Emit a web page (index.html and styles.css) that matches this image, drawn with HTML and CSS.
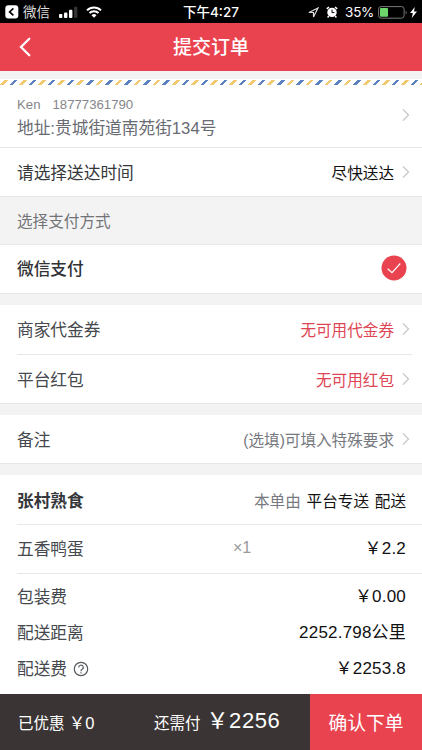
FILE: index.html
```html
<!DOCTYPE html>
<html lang="zh-CN">
<head>
    <meta charset="UTF-8">
    <meta name="viewport" content="width=device-width, initial-scale=1.0">
    <title>提交订单</title>
    <link rel="stylesheet" href="styles.css">
</head>
<body>
    <div class="status-bar">
        <div class="status-left">
            <svg class="back-app" width="14" height="14" viewBox="0 0 14 14">
                <rect x="0.3" y="0.3" width="13" height="13.2" rx="3" fill="#fff"/>
                <path d="M8.4 3.4 4.6 6.9l3.8 3.5" fill="none" stroke="#000" stroke-width="1.6"/>
            </svg>
            <span class="app-name">微信</span>
            <svg class="signal" width="19" height="12" viewBox="0 0 19 12">
                <rect x="0" y="8" width="3.4" height="4" rx="1" fill="#fff"/>
                <rect x="5" y="6.4" width="3.4" height="5.6" rx="1" fill="#fff"/>
                <rect x="10" y="3.8" width="3.4" height="8.2" rx="1" fill="#fff"/>
                <rect x="15" y="0.8" width="3.4" height="11.2" rx="1" fill="#333"/>
            </svg>
            <svg class="wifi" width="16" height="12" viewBox="0 0 16 12">
                <path d="M1 4.4a10 10 0 0 1 14 0M3.5 7a6.4 6.4 0 0 1 9 0" fill="none" stroke="#fff" stroke-width="2"/>
                <path d="M8 11.8 5.5 9.2a3.5 3.5 0 0 1 5 0z" fill="#fff"/>
            </svg>
        </div>
        <span class="time">下午4:27</span>
        <div class="status-right">
            <svg class="location" width="11" height="11" viewBox="0 0 11 11">
                <path d="M10 1 .9 5.500h4.600V10z" fill="none" stroke="#ddd" stroke-width="1.200"/>
            </svg>
            <svg class="alarm" width="12" height="12" viewBox="0 0 12 12">
                <circle cx="6" cy="6.4" r="4.7" fill="#fff"/>
                <path d="M.8 2.9 3 1M11.2 2.9 9 1M2.8 10l-1.2 1.4M9.2 10l1.2 1.4" stroke="#fff" stroke-width="1.5"/>
                <path d="M6 3.6v3h2.4" fill="none" stroke="#000" stroke-width="1"/>
            </svg>
            <span>35%</span>
            <svg class="battery" width="29" height="13" viewBox="0 0 29 13">
                <rect x=".6" y=".6" width="25.5" height="11.6" rx="2.5" fill="none" stroke="#777"/>
                <rect x="2" y="2" width="8" height="8.8" rx="1" fill="#6cd86c"/>
                <path d="M27.7 4.5q2 2 0 4z" fill="#777"/>
            </svg>
            <svg class="bolt" width="7" height="11" viewBox="0 0 7 11">
                <path d="M4.8 0 0 6h2.8L1.8 11 7 4.6H4z" fill="#fff"/>
            </svg>
        </div>
    </div>

    <div class="header">
        <svg class="back" width="12" height="20" viewBox="0 0 12 20">
            <path d="M10.3 1.8 2 10l8.3 8.2" fill="none" stroke="#fff" stroke-width="2.3" stroke-linecap="round"/>
        </svg>
        <h1>提交订单</h1>
    </div>

    <div class="top-gap"></div>
    <div class="stripes"><div class="stripes-inner"></div></div>

    <div class="address">
        <div>
            <div class="contact"><span>Ken</span><span>18777361790</span></div>
            <div class="place">地址:贵城街道南苑街134号</div>
        </div>
        <svg class="arrow" width="8" height="14" viewBox="0 0 8 14"><path d="M1 1.3 6.5 7 1 12.7"/></svg>
    </div>
    <div class="row time-row">
        <span class="label dark">请选择送达时间</span>
        <span class="value black">尽快送达</span>
        <svg class="arrow" width="8" height="14" viewBox="0 0 8 14"><path d="M1 1.3 6.5 7 1 12.7"/></svg>
    </div>
    <div class="section-title">选择支付方式</div>
    <div class="row pay-row">
        <span class="label medium">微信支付</span>
        <svg class="check" width="26" height="26" viewBox="0 0 26 26">
            <circle cx="13" cy="13" r="12.5" fill="#ea4350"/>
            <path d="m6.700 13.700 4.300 4 8.300-9.200" fill="none" stroke="#fff" stroke-width="1.2"/>
        </svg>
    </div>

    <div class="gap"></div>
    <div class="row coupon-row">
        <span class="label">商家代金券</span>
        <span class="value red">无可用代金券</span>
        <svg class="arrow" width="8" height="14" viewBox="0 0 8 14"><path d="M1 1.3 6.5 7 1 12.7"/></svg>
    </div>
    <div class="line short"></div>
    <div class="row packet-row">
        <span class="label">平台红包</span>
        <span class="value red">无可用红包</span>
        <svg class="arrow" width="8" height="14" viewBox="0 0 8 14"><path d="M1 1.3 6.5 7 1 12.7"/></svg>
    </div>

    <div class="gap"></div>
    <div class="row note-row">
        <span class="label">备注</span>
        <span class="value gray">(选填)可填入特殊要求</span>
        <svg class="arrow" width="8" height="14" viewBox="0 0 8 14"><path d="M1 1.3 6.5 7 1 12.7"/></svg>
    </div>

    <div class="gap"></div>
    <div class="row shop-row">
        <span class="label bold">张村熟食</span>
        <span class="value gray">本单由 <span class="black">平台专送 配送</span></span>
    </div>
    <div class="line"></div>
    <div class="row goods-row">
        <span class="label">五香鸭蛋</span>
        <span class="count">×1</span>
        <span class="price">￥2.2</span>
    </div>
    <div class="line"></div>
    <div class="fees">
        <div class="fee"><span class="label">包装费</span><span class="price">￥0.00</span></div>
        <div class="fee"><span class="label">配送距离</span><span class="price">2252.798公里</span></div>
        <div class="fee">
            <span class="label">配送费</span>
            <svg class="help" width="16" height="16" viewBox="0 0 16 16">
                <circle cx="8" cy="8" r="6.7"/>
                <path d="M5.7 6.5a2.3 2.2 0 1 1 3.5 1.8Q8 9 8 10.2M8 11.2v1.2"/>
            </svg>
            <span class="price">￥2253.8</span>
        </div>
    </div>

    <div class="footer">
        <div class="total">
            <span class="saved">已优惠 <span class="saved-sum">￥0</span></span>
            <span class="pay-label">还需付</span>
            <span class="amount">￥2256</span>
        </div>
        <div class="submit">确认下单</div>
    </div>
</body>
</html>
```

FILE: styles.css
```css
* {
    box-sizing: border-box;
}
body {
    margin: 0;
    width: 422px;
    height: 750px;
    overflow: hidden;
    display: flex;
    flex-direction: column;
    background-color: #fff;
    color: #45484d;
    font-family: "Liberation Sans", "Noto Sans CJK SC", sans-serif;
    font-size: 16px;
    white-space: nowrap;
}
body > div {
    flex-shrink: 0;
}
svg {
    display: block;
    flex-shrink: 0;
}
.status-bar {
    height: 23px;
    padding: 1px 5px 0;
    display: grid;
    grid-template-columns: 1fr auto 1fr;
    align-items: center;
    background-color: #000;
    color: #fff;
    font-family: Inter, "Noto Sans CJK SC", sans-serif;
    font-size: 13.5px;
    line-height: 22px;
}
.status-left, .status-right {
    display: flex;
    align-items: center;
}
.status-right {
    justify-content: flex-end;
}
.status-right span {
    letter-spacing: -0.3px;
}
.app-name {
    margin: 0 9px 0 4px;
    color: #ddd;
}
.wifi {
    margin-left: 8px;
}
.time {
    font-size: 13.5px;
    font-weight: 500;
}
.alarm {
    margin: 0 7px 0 7px;
}
.battery {
    margin: 0 3px 0 4px;
}
.header {
    height: 48px;
    padding: 0 19px;
    display: grid;
    grid-template-columns: 12px 1fr 12px;
    align-items: center;
    background-color: #ea4350;
    color: #fff;
}
h1 {
    margin: 0;
    padding-top: 1px;
    font-size: 19px;
    font-weight: 500;
    line-height: 47px;
    text-align: center;
}
.top-gap {
    height: 8px;
    background-color: #f3f3f3;
}
.stripes {
    height: 6px;
    padding-top: 1px;
    overflow: hidden;
}
.stripes-inner {
    height: 5px;
    margin: 0 -10px;
    background: repeating-linear-gradient(90deg, #f2c970 0 3.5px, #fff 3.5px 9.55px, #5a81c0 9.55px 13.05px, #fff 13.05px 19.1px);
    background-position: -7px 0;
    transform: skewX(-45deg);
}
.address {
    height: 63px;
    padding: 0 12px 0 17px;
    border-bottom: 1px solid #e6e6e6;
    display: flex;
    justify-content: space-between;
}
.contact {
    display: flex;
    gap: 12px;
    margin-top: 9px;
    font-size: 13.2px;
    line-height: 22px;
    color: #85868a;
}
.place {
    font-size: 16.7px;
    line-height: 26px;
    color: #686b72;
}
.arrow {
    fill: none;
    stroke: #c4c4c7;
    stroke-width: 1.2;
}
.address .arrow {
    margin-top: 23px;
}
.row {
    height: 49px;
    padding: 0 12px 0 17px;
    display: flex;
    align-items: center;
}
.label {
    font-size: 16.7px;
}
.dark {
    color: #35373b;
}
.medium {
    color: #303236;
    font-weight: 500;
}
.bold {
    color: #35373b;
    font-weight: 700;
}
.value {
    margin-left: auto;
    margin-right: 8px;
    font-size: 15.6px;
}
.black {
    color: #111;
}
.red {
    color: #dd4553;
}
.gray {
    color: #777980;
}
.time-row {
    border-bottom: 1px solid #e6e6e6;
}
.section-title {
    height: 48px;
    padding-left: 17px;
    border-bottom: 1px solid #e9e9e9;
    background-color: #f3f3f3;
    color: #727377;
    font-size: 15.6px;
    line-height: 49px;
}
.pay-row {
    height: 48px;
    padding-right: 15px;
    padding-bottom: 2px;
}
.check {
    margin-left: auto;
}
.gap {
    height: 12px;
    border-top: 1px solid #e6e6e6;
    background-color: #f3f3f3;
}
.line {
    height: 1px;
    margin-left: 17px;
    background-color: #e8e8e8;
}
.short {
    margin-right: 10px;
}
.coupon-row {
    padding-bottom: 2px;
}
.packet-row, .note-row {
    height: 48px;
}
.packet-row {
    padding-bottom: 1px;
}
.shop-row, .goods-row {
    height: 49px;
    padding-right: 16px;
}
.shop-row .value {
    margin-right: 0;
    word-spacing: 1.5px;
}
.goods-row {
    height: 48px;
    padding-bottom: 2px;
}
.count {
    margin-left: auto;
    width: 84px;
    color: #999;
}
.price {
    margin-left: auto;
    padding-bottom: 3px;
    color: #111;
    font-size: 17px;
    letter-spacing: 0.2px;
}
.goods-row .price {
    margin-left: 0;
    width: 89px;
    text-align: right;
}
.fees {
    flex: 1;
    padding: 4px 16px 0 17px;
}
.fee {
    height: 36px;
    display: flex;
    align-items: center;
}
.help {
    margin: 2px 0 0 6px;
    fill: none;
    stroke: #55585d;
    stroke-width: 1.2;
}
.footer {
    height: 56px;
    display: flex;
    background-color: #3a3534;
    color: #fff;
    font-size: 15.5px;
    line-height: 59px;
}
.total {
    width: 310px;
    padding-left: 18px;
    display: flex;
}
.saved {
    width: 136px;
}
.saved-sum {
    font-size: 16.5px;
}
.amount {
    margin-left: 6px;
    font-size: 22px;
    letter-spacing: 0.6px;
    line-height: 53px;
}
.submit {
    flex: 1;
    background-color: #ea4350;
    font-size: 18.8px;
    text-align: center;
}
```
